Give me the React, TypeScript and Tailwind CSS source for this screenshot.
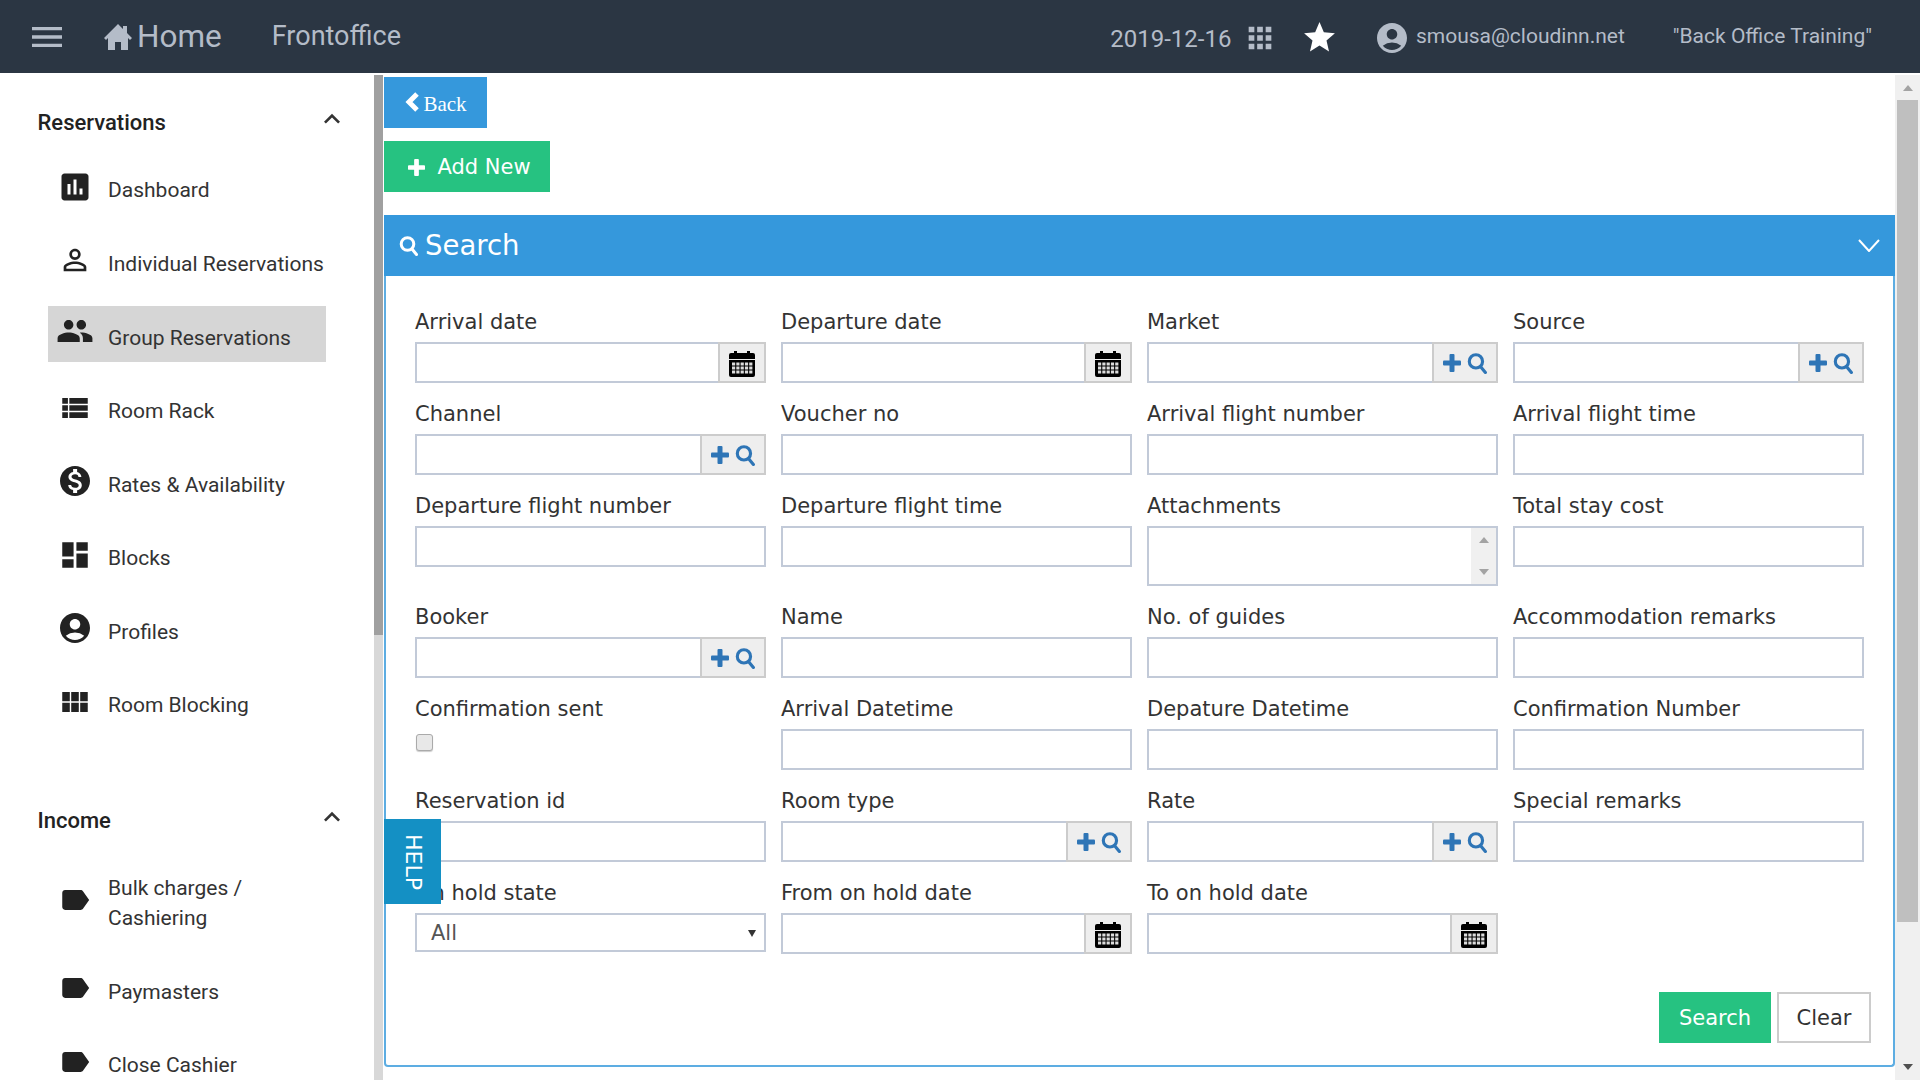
import React from "react";
import { MdMenu, MdApps, MdStar, MdAccountCircle, MdAssessment, MdPersonOutline, MdPeople, MdViewList, MdMonetizationOn, MdDashboard, MdViewModule, MdLabel, MdExpandLess } from "react-icons/md";

const Search = ({ s = 21, c = "#2e75b6", w = 3 }: { s?: number; c?: string; w?: number }) => (
  <svg width={s} height={s} viewBox="0 0 20 20" fill="none" stroke={c} strokeWidth={w} strokeLinecap="round">
    <circle cx="8.5" cy="8" r="6.3" />
    <line x1="13" y1="13" x2="17.5" y2="18.5" />
  </svg>
);

const Plus = ({ s = 18, c = "#2e75b6" }: { s?: number; c?: string }) => (
  <svg width={s} height={s} viewBox="0 0 18 18" fill={c}>
    <rect x="6.5" y="0" width="5" height="18" rx="1" />
    <rect x="0" y="6.5" width="18" height="5" rx="1" />
  </svg>
);

const Cal = () => (
  <svg width="28" height="28" viewBox="0 0 28 28">
    <path d="M1 6a2 2 0 0 1 2-2h3V2h3v2h10V2h3v2h3a2 2 0 0 1 2 2v4H1z" fill="#000" />
    <path d="M1 11h26v15a2 2 0 0 1-2 2H3a2 2 0 0 1-2-2z" fill="#000" />
    {[0, 1, 2, 3, 4].map((c) =>
      [0, 1, 2].map((r) => <rect key={`${c}-${r}`} x={4 + c * 4.3} y={13.5 + r * 4} width="3.2" height="3" fill="#ddd" />)
    )}
  </svg>
);

type Kind = "text" | "cal" | "search" | "area" | "check" | "select" | "none";
const Field = ({ label, kind = "text" }: { label?: string; kind?: Kind }) => (
  <div>
    <div className="h-[51px] pt-[16px] text-[21px] leading-[30px] text-[#333]">{label}</div>
    {kind === "text" && <div className="h-[41px] border-2 border-[#c2cad8] bg-white" />}
    {kind === "cal" && (
      <div className="flex h-[41px]">
        <div className="flex-1 border-2 border-r-0 border-[#c2cad8]" />
        <div className="flex w-[48px] items-center justify-center border-2 border-[#ccc] bg-[#eee]"><Cal /></div>
      </div>
    )}
    {kind === "search" && (
      <div className="flex h-[41px]">
        <div className="flex-1 border-2 border-r-0 border-[#c2cad8]" />
        <div className="flex w-[66px] items-center justify-center gap-[6px] border-2 border-[#ccc] bg-[#eee] pt-[1px]">
          <Plus />
          <Search />
        </div>
      </div>
    )}
    {kind === "area" && (
      <div className="flex h-[60px] border-2 border-[#c2cad8]">
        <div className="flex-1" />
        <div className="flex w-[25px] flex-col items-center justify-between bg-[#f0f0f0] py-[9px]">
          <div className="h-0 w-0 border-x-[5.5px] border-b-[6px] border-x-transparent border-b-[#a3a3a3]" />
          <div className="h-0 w-0 border-x-[5.5px] border-t-[6px] border-x-transparent border-t-[#a3a3a3]" />
        </div>
      </div>
    )}
    {kind === "check" && (
      <div className="pt-[5px]">
        <div className="ml-px h-[17px] w-[17px] rounded-[3px] border border-[#aaa] bg-[#e8e8e8] shadow-[0_1px_1px_#ccc]" />
      </div>
    )}
    {kind === "select" && (
      <div className="flex h-[39px] items-center justify-between border-2 border-[#c2cad8] pl-[14px] pr-[8px] pt-[2px] text-[21px] text-[#555]">
        <span>All</span>
        <span className="h-0 w-0 border-x-[4px] border-t-[7px] border-x-transparent border-t-[#333]" />
      </div>
    )}
  </div>
);

const fields: { l?: string; k?: Kind }[] = [
  { l: "Arrival date", k: "cal" }, { l: "Departure date", k: "cal" }, { l: "Market", k: "search" }, { l: "Source", k: "search" },
  { l: "Channel", k: "search" }, { l: "Voucher no" }, { l: "Arrival flight number" }, { l: "Arrival flight time" },
  { l: "Departure flight number" }, { l: "Departure flight time" }, { l: "Attachments", k: "area" }, { l: "Total stay cost" },
  { l: "Booker", k: "search" }, { l: "Name" }, { l: "No. of guides" }, { l: "Accommodation remarks" },
  { l: "Confirmation sent", k: "check" }, { l: "Arrival Datetime" }, { l: "Depature Datetime" }, { l: "Confirmation Number" },
  { l: "Reservation id" }, { l: "Room type", k: "search" }, { l: "Rate", k: "search" }, { l: "Special remarks" },
  { l: "On hold state", k: "select" }, { l: "From on hold date", k: "cal" }, { l: "To on hold date", k: "cal" }, { k: "none" },
];

const NavItem = ({ icon, text, active, tall }: { icon: React.ReactNode; text: React.ReactNode; active?: boolean; tall?: boolean }) => (
  <div className={`ml-[48px] flex w-[278px] items-center ${active ? "mt-[6px] mb-[12px] h-[56px] bg-[#d6d6d6]" : tall ? "mt-[5px] h-[104px]" : "h-[73.5px]"}`}>
    <div className="flex w-[54px] shrink-0 justify-center pb-[6px] text-[#222]">{icon}</div>
    <div className={`ml-[6px] pt-[1px] text-[21px] leading-[30px] text-[#333] ${active ? "pt-[7px]" : ""}`}>{text}</div>
  </div>
);

const Head = ({ children }: { children: React.ReactNode }) => (
  <div className="flex h-[50px] items-center justify-between pl-[37.5px] pr-[26px] text-[22px] font-medium text-[#222]">
    <span>{children}</span>
    <MdExpandLess size={32} color="#333" className="-mt-[7px]" />
  </div>
);

export default function App() {
  return (
    <div className="flex h-screen w-full flex-col overflow-hidden bg-white font-['Roboto',sans-serif]">
      <header className="flex h-[73px] shrink-0 items-center bg-[#2b3643] text-[#b4bcc8]">
        <MdMenu size={40} className="ml-[27px]" />
        <svg width="28" height="26" viewBox="0 0 28 26" fill="currentColor" className="ml-[37px]">
          <path d="M14 0 L19 5 V2 H23 V9 L28 14 L26 16 L24 14 V26 H17 V18 H11 V26 H4 V14 L2 16 L0 14 Z" />
        </svg>
        <span className="ml-[5px] text-[31.5px]">Home</span>
        <span className="ml-[50px] text-[27px]">Frontoffice</span>
        <div className="ml-auto flex items-center pr-[48px]">
          <span className="pt-[4px] text-[24px]">2019-12-16</span>
          <MdApps size={34} className="ml-[12px] mt-[2px]" />
          <MdStar size={37} color="#fff" className="ml-[24px] mt-[2px]" />
          <MdAccountCircle size={36} className="ml-[35.5px] mt-[2px]" />
          <span className="ml-[6px] text-[21px]">smousa@cloudinn.net</span>
          <span className="ml-[48px] text-[21px]">"Back Office Training"</span>
        </div>
      </header>
      <div className="mt-[2px] flex min-h-0 flex-1">
        <aside className="w-[374px] shrink-0 overflow-hidden pt-[22px]">
          <Head>Reservations</Head>
          <div className="h-[6px]" />
          <NavItem icon={<MdAssessment size={36} />} text="Dashboard" />
          <NavItem icon={<MdPersonOutline size={34} />} text="Individual Reservations" />
          <NavItem active icon={<MdPeople size={38} />} text="Group Reservations" />
          <NavItem icon={<MdViewList size={34} />} text="Room Rack" />
          <NavItem icon={<MdMonetizationOn size={36} />} text="Rates & Availability" />
          <NavItem icon={<MdDashboard size={34} />} text="Blocks" />
          <NavItem icon={<MdAccountCircle size={36} />} text="Profiles" />
          <NavItem icon={<MdViewModule size={34} />} text="Room Blocking" />
          <div className="h-[54px]" />
          <Head>Income</Head>
          <NavItem tall icon={<MdLabel size={34} />} text={<>Bulk charges /<br />Cashiering</>} />
          <NavItem icon={<MdLabel size={34} />} text="Paymasters" />
          <NavItem icon={<MdLabel size={34} />} text="Close Cashier" />
        </aside>
        <div className="w-[9px] shrink-0 bg-[#d8d8d8]">
          <div className="h-[560px] bg-[#a0a0a0]" />
        </div>
        <main className="relative ml-px min-w-0 flex-1 pt-[2px]">
          <button className="flex h-[51px] w-[103px] items-center justify-center gap-[4px] bg-[#3598dc] pt-[4px] font-['Liberation_Serif',serif] text-[21px] text-white">
            <svg width="15" height="20" viewBox="0 0 15 20" className="-mt-[5px]" fill="none" stroke="#fff" strokeWidth="5">
              <polyline points="13,2 5,10 13,18" />
            </svg>
            Back
          </button>
          <button className="mt-[13px] flex h-[51px] w-[166px] items-center justify-center gap-[12px] bg-[#26c281] pl-[5px] pt-[2px] font-['DejaVu_Sans',sans-serif] text-[21px] text-white">
            <Plus s={17} c="#fff" />Add New
          </button>
          <section className="mt-[23px] h-[852px] rounded-[4px] border-2 border-t-0 border-[#5dade2] font-['DejaVu_Sans',sans-serif]">
            <div className="-mx-[2px] flex h-[61px] items-center justify-between bg-[#3598dc] pl-[15px] pr-[15px] text-white">
              <div className="flex items-center gap-[6px] pt-[1px]">
                <Search s={20} c="#fff" />
                <span className="text-[27.5px]">Search</span>
              </div>
              <svg width="22" height="13" viewBox="0 0 22 13" fill="none" stroke="#fff" strokeWidth="2">
                <polyline points="1,1 11,12 21,1" />
              </svg>
            </div>
            <div className="grid grid-cols-4 gap-x-[15px] pl-[29px] pr-[29px] pt-[15px]">
              {fields.map((f, i) => <Field key={i} label={f.l} kind={f.k ?? "text"} />)}
            </div>
            <div className="absolute right-[24px] top-[917px] flex gap-[6px] text-[21px]">
              <button className="h-[51px] w-[112px] bg-[#26c281] pt-[2px] text-white">Search</button>
              <button className="h-[51px] w-[94px] border-2 border-[#ccc] pt-[2px] text-[#333]">Clear</button>
            </div>
          </section>
          <div className="absolute left-0 top-[744px] flex h-[85px] w-[57px] items-center justify-center bg-[#1490c4] pl-[2px] font-['DejaVu_Sans',sans-serif] text-[22px] text-white [writing-mode:vertical-rl]">HELP</div>
        </main>
        <div className="flex w-[25px] shrink-0 flex-col bg-[#f0f0f0]">
          <div className="flex h-[25px] items-center justify-center">
            <div className="h-0 w-0 border-x-[5.5px] border-b-[6px] border-x-transparent border-b-[#a3a3a3]" />
          </div>
          <div className="mx-[2px] h-[822px] bg-[#bfbfbf]" />
          <div className="mt-auto flex h-[28px] items-start justify-center pt-[12px]">
            <div className="h-0 w-0 border-x-[5.5px] border-t-[6px] border-x-transparent border-t-[#505050]" />
          </div>
        </div>
      </div>
    </div>
  );
}
